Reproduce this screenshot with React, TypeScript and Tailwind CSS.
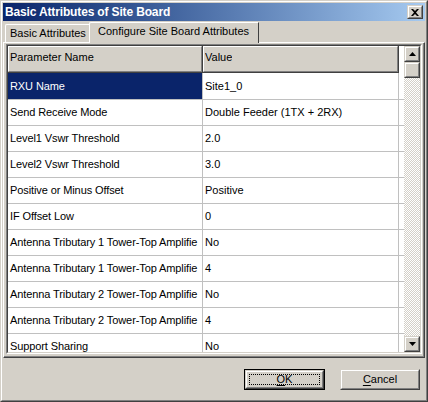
import React from 'react';

const rows: [string, string][] = [
  ['RXU Name', 'Site1_0'],
  ['Send Receive Mode', 'Double Feeder (1TX + 2RX)'],
  ['Level1 Vswr Threshold', '2.0'],
  ['Level2 Vswr Threshold', '3.0'],
  ['Positive or Minus Offset', 'Positive'],
  ['IF Offset Low', '0'],
  ['Antenna Tributary 1 Tower-Top Amplifie', 'No'],
  ['Antenna Tributary 1 Tower-Top Amplifie', '4'],
  ['Antenna Tributary 2 Tower-Top Amplifie', 'No'],
  ['Antenna Tributary 2 Tower-Top Amplifie', '4'],
  ['Support Sharing', 'No'],
];

// raised 3d box, win2000 style
const Raised: React.FC<{ className?: string; children?: React.ReactNode }> = ({ className = '', children }) => (
  <div className={`border border-t-[#d4d0c8] border-l-[#d4d0c8] border-r-[#404040] border-b-[#404040] ${className}`}>
    <div className="w-full h-full border border-t-white border-l-white border-r-[#808080] border-b-[#808080] bg-[#d4d0c8] flex items-center justify-center relative">
      {children}
    </div>
  </div>
);

const Arrow: React.FC<{ up?: boolean }> = ({ up }) => (
  <svg width="7" height="4" viewBox="0 0 7 4">
    {up ? <path d="M3.5 0 L7 4 L0 4 Z" fill="#000" /> : <path d="M0 0 L7 0 L3.5 4 Z" fill="#000" />}
  </svg>
);

const HeaderCell: React.FC<{ label: string; className?: string }> = ({ label, className = '' }) => (
  <div className={`h-full border-r border-b border-r-[#404040] border-b-[#404040] ${className}`}>
    <div className="h-full border border-t-white border-l-white border-r-[#808080] border-b-[#808080] bg-[#d4d0c8] flex items-center pl-px pb-[3px]">
      <span className="whitespace-nowrap overflow-hidden">{label}</span>
    </div>
  </div>
);

export default function App() {
  return (
    <div className="w-[428px] h-[402px] bg-[#d4d0c8] border border-t-[#d4d0c8] border-l-[#d4d0c8] border-r-[#404040] border-b-[#404040] font-['Liberation_Sans',sans-serif] text-[11px] leading-none text-black select-none">
      <div className="w-full h-full border border-t-white border-l-white border-r-[#808080] border-b-[#808080] p-px flex flex-col">
        {/* Title bar */}
        <div className="h-[18px] shrink-0 bg-gradient-to-r from-[#0a246a] to-[#a6caf0] flex items-center justify-between pl-[2px] pr-[2px]">
          <span className="text-white font-bold text-[12px] tracking-[-0.15px]">Basic Attributes of Site Board</span>
          <Raised className="w-[16px] h-[14px]">
            <svg width="8" height="7" viewBox="0 0 8 7">
              <path d="M0 0 L2 0 L4 2 L6 0 L8 0 L5 3.5 L8 7 L6 7 L4 5 L2 7 L0 7 L3 3.5 Z" fill="#000" />
            </svg>
          </Raised>
        </div>

        {/* Tabs */}
        <div className="h-[21px] shrink-0 flex items-end pl-[2px] relative z-10">
          <div className="h-[18px] w-[86px] border-t border-l border-t-white border-l-white border-r border-r-[#404040] rounded-tl-[2px] flex items-center pl-[4px] pb-[1px]">
            <span className="whitespace-nowrap">Basic Attributes</span>
          </div>
          <div className="h-[21px] w-[170px] -ml-[2px] -mb-px bg-[#d4d0c8] border-t border-l border-t-white border-l-white border-r border-r-[#404040] rounded-tl-[2px] flex items-center pl-[8px] pb-[3px]">
            <span className="whitespace-nowrap">Configure Site Board Attributes</span>
          </div>
        </div>

        {/* Tab panel */}
        <div className="h-[316px] shrink-0 border border-t-white border-l-white border-r-[#404040] border-b-[#404040]">
          <div className="h-full border-r border-b border-r-[#808080] border-b-[#808080] pt-px pl-[2px] pr-px pb-px">
            {/* sunken list box */}
            <div className="h-[310px] border border-t-[#808080] border-l-[#808080] border-r-white border-b-white">
              <div className="h-full border border-t-[#404040] border-l-[#404040] border-r-[#d4d0c8] border-b-[#d4d0c8] bg-white flex">
                <div className="flex-1 overflow-hidden">
                  <div className="flex h-[27px]">
                    <HeaderCell label="Parameter Name" className="w-[195px]" />
                    <HeaderCell label="Value" className="w-[196px]" />
                  </div>
                  {rows.map(([name, value], i) => (
                    <div
                      key={i}
                      className={`flex border-b border-b-[#c0c0c0] ${i === 0 ? 'h-[27px]' : 'h-[26px]'}`}
                    >
                      <div
                        className={`w-[195px] border-r border-r-[#c0c0c0] flex items-center pl-[2px] overflow-hidden whitespace-nowrap tracking-[-0.1px] ${
                          i === 0 ? 'bg-[#0a246a] text-white' : ''
                        }`}
                      >
                        {name}
                      </div>
                      <div className="w-[196px] border-r border-r-[#c0c0c0] flex items-center pl-[2px] overflow-hidden whitespace-nowrap">
                        {value}
                      </div>
                    </div>
                  ))}
                </div>
                {/* vertical scrollbar */}
                <div className="w-[16px] shrink-0 flex flex-col">
                  <Raised className="w-[16px] h-[16px] shrink-0">
                    <Arrow up />
                  </Raised>
                  <Raised className="w-[16px] h-[16px] shrink-0" />
                  <div className="flex-1 bg-[repeating-conic-gradient(#d4d0c8_0%_25%,#ffffff_0%_50%)] bg-[length:2px_2px]" />
                  <Raised className="w-[16px] h-[16px] shrink-0">
                    <Arrow />
                  </Raised>
                </div>
              </div>
            </div>
          </div>
        </div>

        {/* Buttons */}
        <div className="flex-1 flex items-start justify-end gap-[15px] pt-[11px] pr-[5px]">
          <div className="w-[81px] h-[21px] border border-black">
            <Raised className="w-full h-full">
              <div className="absolute inset-[2px] border border-dotted border-black" />
              <span>
                <span className="underline underline-offset-2">O</span>K
              </span>
            </Raised>
          </div>
          <Raised className="w-[80px] h-[21px]">
            <span>
              <span className="underline underline-offset-2">C</span>ancel
            </span>
          </Raised>
        </div>
      </div>
    </div>
  );
}
